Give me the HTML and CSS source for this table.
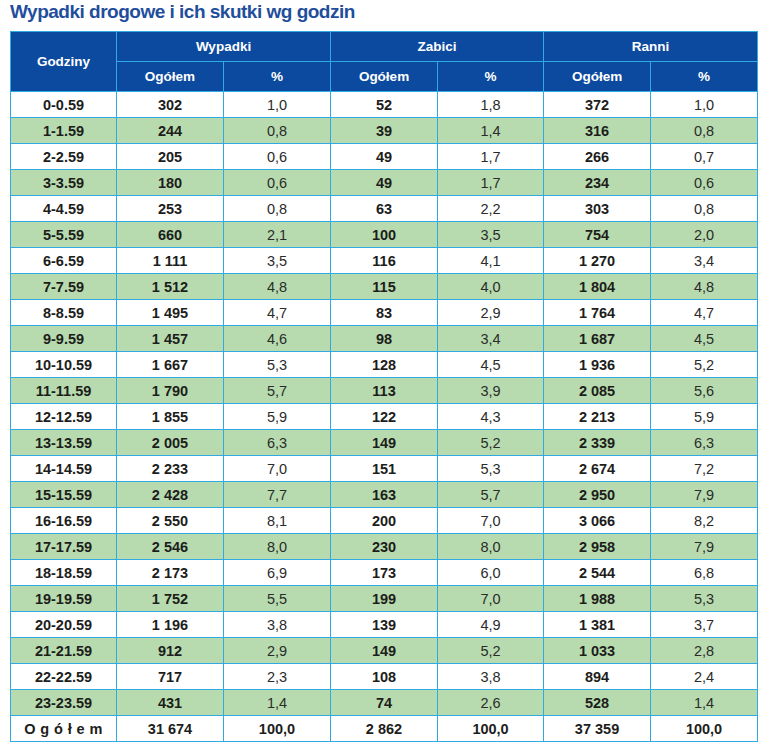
FILE: index.html
```html
<!DOCTYPE html>
<html lang="pl">
<head>
<meta charset="utf-8">
<title>Wypadki drogowe i ich skutki wg godzin</title>
<link rel="stylesheet" href="styles.css">
</head>
<body>
<h1 class="title">Wypadki drogowe i ich skutki wg godzin</h1>
<table class="stats">
  <colgroup>
    <col class="c-first"><col class="c-a"><col class="c-a"><col class="c-a"><col class="c-b"><col class="c-a"><col class="c-a">
  </colgroup>
  <thead>
    <tr class="h1">
      <th rowspan="2">Godziny</th>
      <th colspan="2">Wypadki</th>
      <th colspan="2">Zabici</th>
      <th colspan="2">Ranni</th>
    </tr>
    <tr class="h2">
      <th>Ogółem</th><th>%</th>
      <th>Ogółem</th><th>%</th>
      <th>Ogółem</th><th>%</th>
    </tr>
  </thead>
  <tbody>
    <tr><td>0-0.59</td><td>302</td><td class="p">1,0</td><td>52</td><td class="p">1,8</td><td>372</td><td class="p">1,0</td></tr>
    <tr class="g"><td>1-1.59</td><td>244</td><td class="p">0,8</td><td>39</td><td class="p">1,4</td><td>316</td><td class="p">0,8</td></tr>
    <tr><td>2-2.59</td><td>205</td><td class="p">0,6</td><td>49</td><td class="p">1,7</td><td>266</td><td class="p">0,7</td></tr>
    <tr class="g"><td>3-3.59</td><td>180</td><td class="p">0,6</td><td>49</td><td class="p">1,7</td><td>234</td><td class="p">0,6</td></tr>
    <tr><td>4-4.59</td><td>253</td><td class="p">0,8</td><td>63</td><td class="p">2,2</td><td>303</td><td class="p">0,8</td></tr>
    <tr class="g"><td>5-5.59</td><td>660</td><td class="p">2,1</td><td>100</td><td class="p">3,5</td><td>754</td><td class="p">2,0</td></tr>
    <tr><td>6-6.59</td><td>1 111</td><td class="p">3,5</td><td>116</td><td class="p">4,1</td><td>1 270</td><td class="p">3,4</td></tr>
    <tr class="g"><td>7-7.59</td><td>1 512</td><td class="p">4,8</td><td>115</td><td class="p">4,0</td><td>1 804</td><td class="p">4,8</td></tr>
    <tr><td>8-8.59</td><td>1 495</td><td class="p">4,7</td><td>83</td><td class="p">2,9</td><td>1 764</td><td class="p">4,7</td></tr>
    <tr class="g"><td>9-9.59</td><td>1 457</td><td class="p">4,6</td><td>98</td><td class="p">3,4</td><td>1 687</td><td class="p">4,5</td></tr>
    <tr><td>10-10.59</td><td>1 667</td><td class="p">5,3</td><td>128</td><td class="p">4,5</td><td>1 936</td><td class="p">5,2</td></tr>
    <tr class="g"><td>11-11.59</td><td>1 790</td><td class="p">5,7</td><td>113</td><td class="p">3,9</td><td>2 085</td><td class="p">5,6</td></tr>
    <tr><td>12-12.59</td><td>1 855</td><td class="p">5,9</td><td>122</td><td class="p">4,3</td><td>2 213</td><td class="p">5,9</td></tr>
    <tr class="g"><td>13-13.59</td><td>2 005</td><td class="p">6,3</td><td>149</td><td class="p">5,2</td><td>2 339</td><td class="p">6,3</td></tr>
    <tr><td>14-14.59</td><td>2 233</td><td class="p">7,0</td><td>151</td><td class="p">5,3</td><td>2 674</td><td class="p">7,2</td></tr>
    <tr class="g"><td>15-15.59</td><td>2 428</td><td class="p">7,7</td><td>163</td><td class="p">5,7</td><td>2 950</td><td class="p">7,9</td></tr>
    <tr><td>16-16.59</td><td>2 550</td><td class="p">8,1</td><td>200</td><td class="p">7,0</td><td>3 066</td><td class="p">8,2</td></tr>
    <tr class="g"><td>17-17.59</td><td>2 546</td><td class="p">8,0</td><td>230</td><td class="p">8,0</td><td>2 958</td><td class="p">7,9</td></tr>
    <tr><td>18-18.59</td><td>2 173</td><td class="p">6,9</td><td>173</td><td class="p">6,0</td><td>2 544</td><td class="p">6,8</td></tr>
    <tr class="g"><td>19-19.59</td><td>1 752</td><td class="p">5,5</td><td>199</td><td class="p">7,0</td><td>1 988</td><td class="p">5,3</td></tr>
    <tr><td>20-20.59</td><td>1 196</td><td class="p">3,8</td><td>139</td><td class="p">4,9</td><td>1 381</td><td class="p">3,7</td></tr>
    <tr class="g"><td>21-21.59</td><td>912</td><td class="p">2,9</td><td>149</td><td class="p">5,2</td><td>1 033</td><td class="p">2,8</td></tr>
    <tr><td>22-22.59</td><td>717</td><td class="p">2,3</td><td>108</td><td class="p">3,8</td><td>894</td><td class="p">2,4</td></tr>
    <tr class="g"><td>23-23.59</td><td>431</td><td class="p">1,4</td><td>74</td><td class="p">2,6</td><td>528</td><td class="p">1,4</td></tr>
    <tr class="total"><td class="spaced">O g ó ł e m</td><td>31 674</td><td>100,0</td><td>2 862</td><td>100,0</td><td>37 359</td><td>100,0</td></tr>
  </tbody>
</table>
</body>
</html>
```

FILE: styles.css
```css
html, body {
  margin: 0;
  padding: 0;
  background: #ffffff;
}

body {
  font-family: "Liberation Sans", Arial, sans-serif;
  color: #1d1d1b;
}

.title {
  margin: 0 0 8px 10px;
  padding-top: 1px;
  font-size: 19px;
  line-height: 22px;
  letter-spacing: -0.5px;
  font-weight: bold;
  color: #1f4e9c;
}

.stats {
  margin-left: 10px;
  border-collapse: collapse;
  table-layout: fixed;
  width: 748px;
}

.c-first { width: 106px; }
.c-a { width: 107px; }
.c-b { width: 106px; }

.stats th,
.stats td {
  border: 1px solid #31a9e1;
  padding: 0;
  text-align: center;
  vertical-align: middle;
}

.stats th {
  background: #0c4a9f;
  color: #ffffff;
  font-size: 13.5px;
  font-weight: bold;
  height: 29px;
}

.stats td {
  height: 25px;
  font-size: 14.5px;
  font-weight: bold;
  color: #1d1d1b;
}

.stats td.p {
  font-weight: normal;
  color: #2b2b2b;
}

.stats tr.g td {
  background: #b7dbae;
}

.stats tr.total td:nth-child(3),
.stats tr.total td:nth-child(5),
.stats tr.total td:nth-child(7) {
  font-weight: bold;
}

.stats td.spaced {
  letter-spacing: 0.4px;
}
```
